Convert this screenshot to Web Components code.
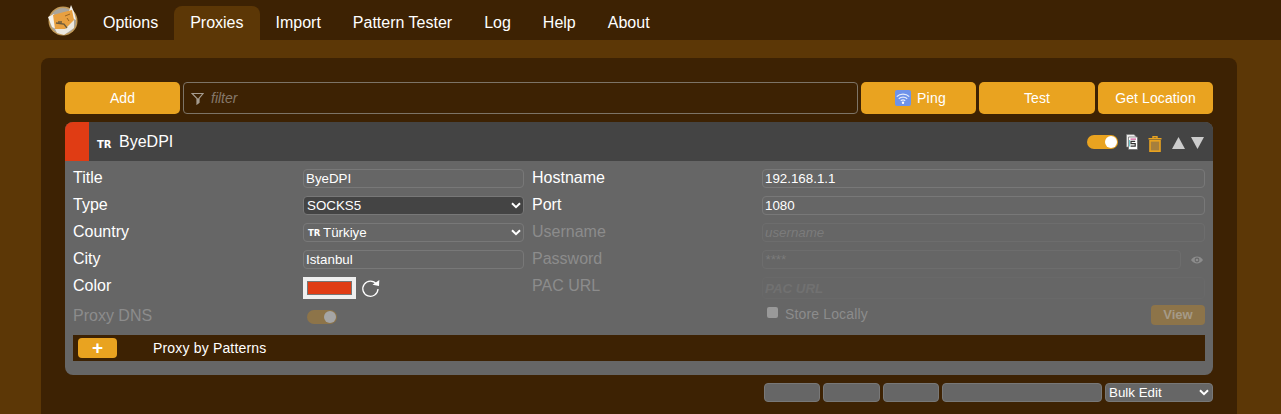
<!DOCTYPE html>
<html lang="en">
<head>
<meta charset="utf-8">
<title>Proxies</title>
<style>
    html, body { margin: 0; height: 100%; overflow: hidden; }
    body {
        background: #5c3706;
        color: #fff;
        font: 16px "Liberation Sans", Arial, sans-serif;
    }
</style>
</head>
<body>
<fox-nav>
    <fox-tab>Options</fox-tab>
    <fox-tab active>Proxies</fox-tab>
    <fox-tab>Import</fox-tab>
    <fox-tab>Pattern Tester</fox-tab>
    <fox-tab>Log</fox-tab>
    <fox-tab>Help</fox-tab>
    <fox-tab>About</fox-tab>
</fox-nav>
<fox-panel>
    <fox-toolbar>
        <fox-button>Add</fox-button>
        <fox-filter></fox-filter>
        <fox-button icon="wifi">Ping</fox-button>
        <fox-button>Test</fox-button>
        <fox-button>Get Location</fox-button>
    </fox-toolbar>
    <proxy-card title-text="ByeDPI" flag="TR">
        <fox-label>Title</fox-label>
        <fox-input value="ByeDPI"></fox-input>
        <fox-label>Hostname</fox-label>
        <fox-input value="192.168.1.1"></fox-input>

        <fox-label>Type</fox-label>
        <fox-select dark options="SOCKS5"></fox-select>
        <fox-label>Port</fox-label>
        <fox-input value="1080"></fox-input>

        <fox-label>Country</fox-label>
        <fox-select options="Türkiye" flag="TR"></fox-select>
        <fox-label disabled>Username</fox-label>
        <fox-input placeholder="username" disabled></fox-input>

        <fox-label>City</fox-label>
        <fox-input value="Istanbul"></fox-input>
        <fox-label disabled>Password</fox-label>
        <fox-input placeholder="****" disabled eye></fox-input>

        <fox-label>Color</fox-label>
        <fox-color value="#e03c14"></fox-color>
        <fox-label disabled>PAC URL</fox-label>
        <fox-input placeholder="PAC URL" disabled tall></fox-input>

        <fox-label disabled>Proxy DNS</fox-label>
        <fox-toggle disabled></fox-toggle>
        <span></span>
        <fox-store></fox-store>

        <fox-patterns slot="footer">Proxy by Patterns</fox-patterns>
    </proxy-card>
    <fox-bulk></fox-bulk>
</fox-panel>

<script>
class FoxNav extends HTMLElement {
    constructor() {
        super();
        this.attachShadow({ mode: 'open' });
        this.shadowRoot.innerHTML = `
            <style>
                :host {
                    display: flex;
                    align-items: flex-end;
                    height: 40px;
                    padding-left: 47px;
                    background: #3d2203;
                }
                svg { width: 33px; height: 33px; margin: 0 7px 3px 0; display: block; }
            </style>
            <svg viewBox="0 0 33 33">
                <circle cx="16" cy="17" r="14.5" fill="#c29a58"/>
                <circle cx="16" cy="17" r="13" fill="#a9a59c"/>
                <path d="M1 13 L7 10 L11 26 L5 23 Z" fill="#f4f1ea"/>
                <path d="M22 7 L24 1 L27 8 L29 16 L25 14 Z" fill="#f4f1ea"/>
                <path d="M8 25 L18 25 L27 15 L27 24 L17 31 L10 29 Z" fill="#ece8df"/>
                <path d="M6 11 L17 8 L25 6 L27 16 L18 25 L8 25 Z" fill="#e8a040"/>
                <path d="M9 19 L17 20 L20 24" stroke="#6b5a3c" stroke-width="1.3" fill="none"/>
                <path d="M11 18 L15 18" stroke="#4f4a3e" stroke-width="1.2"/>
                <path d="M18 12 L23 10 M20 14 L22 17" stroke="#9a6420" stroke-width="1"/>
            </svg>
            <slot></slot>
        `;
    }
}

class FoxTab extends HTMLElement {
    constructor() {
        super();
        this.attachShadow({ mode: 'open' });
        this.shadowRoot.innerHTML = `
            <style>
                :host {
                    display: block;
                    height: 34px;
                    line-height: 33px;
                    padding: 0 16px;
                    border-radius: 8px 8px 0 0;
                    color: #fff;
                }
                :host([active]) { background: #5c3706; }
            </style>
            <slot></slot>
        `;
    }
}

class FoxPanel extends HTMLElement {
    constructor() {
        super();
        this.attachShadow({ mode: 'open' });
        this.shadowRoot.innerHTML = `
            <style>
                :host {
                    display: block;
                    margin: 18px 44px 0 41px;
                    padding: 24px 24px 24px;
                    border-radius: 8px;
                    background: #3d2203;
                }
            </style>
            <slot></slot>
        `;
    }
}

class FoxToolbar extends HTMLElement {
    constructor() {
        super();
        this.attachShadow({ mode: 'open' });
        this.shadowRoot.innerHTML = `
            <style>
                :host {
                    display: grid;
                    grid-template-columns: 115px 1fr 115px 116px 115px;
                    gap: 3px;
                    height: 32px;
                    margin-bottom: 8px;
                }
            </style>
            <slot></slot>
        `;
    }
}

class FoxButton extends HTMLElement {
    constructor() {
        super();
        this.attachShadow({ mode: 'open' });
        const wifi = this.getAttribute('icon') === 'wifi';
        const icon = wifi ? `
            <svg viewBox="0 0 16 16" width="16" height="16">
                <rect width="16" height="16" rx="2" fill="#6e93ea"/>
                <g fill="none" stroke="#e4ecfb" stroke-width="1.3">
                    <path d="M1.8 6.6 C5 3.2 11 3.2 14.2 6.6"/>
                    <path d="M3.8 8.8 C6 6.6 10 6.6 12.2 8.8"/>
                    <path d="M5.8 10.8 C7 9.8 9 9.8 10.2 10.8"/>
                </g>
                <circle cx="8" cy="12.8" r="1.2" fill="#fff"/>
            </svg>` : '';
        this.shadowRoot.innerHTML = `
            <style>
                :host {
                    display: block;
                }
                button {
                    display: flex;
                    align-items: center;
                    justify-content: center;
                    gap: 6px;
                    box-sizing: border-box;
                    width: 100%;
                    height: 100%;
                    border: 0;
                    padding: 0 0 0 ${wifi ? '4px' : '0'};
                    border-radius: 5px;
                    background: #e9a320;
                    color: #fff;
                    font: 14px "Liberation Sans", Arial, sans-serif;
                    letter-spacing: ${wifi ? '.3px' : '.1px'};
                }
            </style>
            <button>${icon}<slot></slot></button>
        `;
    }
}

class FoxFilter extends HTMLElement {
    constructor() {
        super();
        this.attachShadow({ mode: 'open' });
        this.shadowRoot.innerHTML = `
            <style>
                :host {
                    display: flex;
                    align-items: center;
                    gap: 7px;
                    padding: 0 7px;
                    border: 1px solid #7d7467;
                    border-radius: 4px;
                }
                svg { flex: none; }
                input {
                    flex: 1;
                    min-width: 0;
                    border: 0;
                    padding: 0;
                    background: transparent;
                    color: #fff;
                    font: italic 14px "Liberation Sans", Arial, sans-serif;
                }
                input::placeholder { color: #85786a; opacity: 1; }
            </style>
            <svg viewBox="0 0 13 13" width="13" height="13">
                <path d="M1 1.5 H12 L8 6.5 V10.5 L6 12 V6.5 Z" fill="none" stroke="#a59c90" stroke-width="1.2"/>
                <path d="M6 6.5 H8 V10.5 L6 12 Z" fill="#a59c90"/>
            </svg>
            <input placeholder="filter">
        `;
    }
}

class ProxyCard extends HTMLElement {
    constructor() {
        super();
        this.attachShadow({ mode: 'open' });
        this.shadowRoot.innerHTML = `
            <style>
                :host {
                    display: block;
                    border-radius: 8px;
                    overflow: hidden;
                    background: #666;
                }
                header {
                    display: flex;
                    align-items: center;
                    height: 39px;
                    background: #444;
                }
                .stripe { width: 24px; height: 100%; background: #e03c14; margin-right: 8px; }
                .flag {
                    width: 22px;
                    margin-top: 6px;
                    font: bold 10px "DejaVu Sans", sans-serif;
                }
                .name { flex: 1; }
                .tools { display: flex; align-items: center; padding-right: 9px; }
                .tools svg { display: block; }
                .grid {
                    display: grid;
                    grid-template-columns: 222px 221px 222px 1fr;
                    gap: 8px;
                    padding: 8px 8px 0;
                }
                .foot { padding: 10px 8px 14px; }
            </style>
            <header>
                <div class="stripe"></div>
                <span class="flag">${this.getAttribute('flag')}</span>
                <span class="name">${this.getAttribute('title-text')}</span>
                <div class="tools">
                    <fox-toggle></fox-toggle>
                    <svg viewBox="0 0 12 16" width="12" height="16" style="margin:0 0 0 8px">
                        <path d="M.5 .5 H8 L10.5 3 V13 H.5 Z" fill="#eee" stroke="#777" stroke-width=".6"/>
                        <path d="M2.5 3 H11.5 V15.5 H2.5 Z" fill="#fff" stroke="#666" stroke-width=".7"/>
                        <path d="M4.5 5.2 H10" stroke="#d05a9a" stroke-width="1.2"/>
                        <path d="M9.2 7.4 H5 V9.6 H9.2 V12.2 H4.6" fill="none" stroke="#333" stroke-width="1.2"/>
                        <path d="M3.6 6 V12.5" stroke="#3ab5c0" stroke-width=".8"/>
                    </svg>
                    <svg viewBox="0 0 14 16" width="14" height="16" style="margin:5px 0 0 10px">
                        <path d="M5 2 V.8 H9 V2 M.5 2.7 H13.5" fill="none" stroke="#e9a320" stroke-width="1.4"/>
                        <rect x="2" y="4.8" width="10" height="10.4" fill="#a67f3c" stroke="#e9a320" stroke-width="1.6"/>
                    </svg>
                    <svg viewBox="0 0 13 12" width="13" height="12" style="margin:3px 0 0 10px">
                        <path d="M6.5 0 L13 12 H0 Z" fill="#ccc"/>
                    </svg>
                    <svg viewBox="0 0 13 12" width="13" height="12" style="margin:3px 0 0 6px">
                        <path d="M0 0 H13 L6.5 12 Z" fill="#ccc"/>
                    </svg>
                </div>
            </header>
            <div class="grid"><slot></slot></div>
            <div class="foot"><slot name="footer"></slot></div>
        `;
    }
}

class FoxLabel extends HTMLElement {
    constructor() {
        super();
        this.attachShadow({ mode: 'open' });
        this.shadowRoot.innerHTML = `
            <style>
                :host { display: block; line-height: 18px; color: #fff; }
                :host([disabled]) { color: #8c8c8c; }
            </style>
            <slot></slot>
        `;
    }
}

class FoxInput extends HTMLElement {
    constructor() {
        super();
        this.attachShadow({ mode: 'open' });
        const disabled = this.hasAttribute('disabled');
        const eye = this.hasAttribute('eye') ? `
            <svg viewBox="0 0 12 8" width="12" height="8">
                <path d="M0 4 C3 -.6 9 -.6 12 4 C9 8.6 3 8.6 0 4 Z" fill="#8c8c8c"/>
                <circle cx="6" cy="4" r="2.4" fill="#666"/>
                <circle cx="6" cy="4" r="1.3" fill="#8c8c8c"/>
            </svg>` : '';
        this.shadowRoot.innerHTML = `
            <style>
                :host {
                    display: flex;
                    align-items: center;
                    gap: 10px;
                    height: 19px;
                }
                :host([tall]) { height: 22px; }
                input {
                    flex: 1;
                    min-width: 0;
                    box-sizing: border-box;
                    height: 100%;
                    padding: 0 2px;
                    border: 1px solid #787878;
                    border-radius: 4px;
                    background: transparent;
                    color: #fff;
                    font: 13.33px "Liberation Sans", Arial, sans-serif;
                }
                input:disabled { border-color: #6d6d6d; }
                input::placeholder { color: #7b7b7b; opacity: 1; font-style: italic; }
                :host([tall]) input { border-color: #696969; }
                :host([tall]) input::placeholder { color: #717171; font-weight: bold; }
                svg { flex: none; margin-right: 2px; }
            </style>
            <input value="${this.getAttribute('value') || ''}"
                   placeholder="${this.getAttribute('placeholder') || ''}"
                   ${disabled ? 'disabled' : ''}>
            ${eye}
        `;
    }
}

class FoxSelect extends HTMLElement {
    constructor() {
        super();
        this.attachShadow({ mode: 'open' });
        const flag = this.getAttribute('flag');
        const options = (this.getAttribute('options') || '').split(',')
            .map(o => `<option>${o}</option>`).join('');
        this.shadowRoot.innerHTML = `
            <style>
                :host {
                    display: block;
                    position: relative;
                    height: 19px;
                }
                select {
                    appearance: none;
                    box-sizing: border-box;
                    width: 100%;
                    height: 100%;
                    padding: 0 2px 0 ${flag ? '19px' : '3px'};
                    border: 1px solid #787878;
                    border-radius: 4px;
                    background: transparent;
                    color: #fff;
                    font: 13.33px "Liberation Sans", Arial, sans-serif;
                }
                option { background: #444; }
                :host([dark]) select { background: #444; }
                .flag {
                    position: absolute;
                    left: 5px;
                    top: 5px;
                    font: bold 8.5px/10px "DejaVu Sans", sans-serif;
                }
                svg { position: absolute; right: 3px; top: 6px; pointer-events: none; }
            </style>
            <select>${options}</select>
            ${flag ? `<span class="flag">${flag}</span>` : ''}
            <svg viewBox="0 0 10 7" width="10" height="7">
                <path d="M1 1.2 L5 5.2 L9 1.2" fill="none" stroke="#fff" stroke-width="2"/>
            </svg>
        `;
    }
}

class FoxColor extends HTMLElement {
    constructor() {
        super();
        this.attachShadow({ mode: 'open' });
        this.shadowRoot.innerHTML = `
            <style>
                :host { display: flex; align-items: center; gap: 5px; height: 22px; }
                input {
                    appearance: none;
                    box-sizing: border-box;
                    width: 53px;
                    height: 22px;
                    padding: 4px;
                    border: 0;
                    background: #efefef;
                }
                input::-webkit-color-swatch-wrapper { padding: 0; }
                input::-webkit-color-swatch { border: 1px solid #767676; border-radius: 0; }
            </style>
            <input type="color" value="${this.getAttribute('value')}">
            <svg viewBox="0 0 19 19" width="19" height="19">
                <path d="M15.4 5 A7.6 7.6 0 1 0 17 10" fill="none" stroke="#fff" stroke-width="1.3"/>
                <path d="M11.5 5.8 L18 7 L18.3 1 Z" fill="#fff"/>
            </svg>
        `;
    }
}

class FoxToggle extends HTMLElement {
    constructor() {
        super();
        this.attachShadow({ mode: 'open' });
        this.shadowRoot.innerHTML = `
            <style>
                :host {
                    display: block;
                    box-sizing: border-box;
                    width: 31px;
                    height: 14px;
                    border-radius: 7px;
                    background: #e9a320;
                    position: relative;
                }
                :host::after {
                    content: "";
                    position: absolute;
                    right: 1px;
                    top: 1px;
                    width: 12px;
                    height: 12px;
                    border-radius: 50%;
                    background: #fff;
                }
                :host([disabled]) { width: 30px; margin: 3px 0 0 4px; background: #8d7449; }
                :host([disabled])::after { background: #a5a5a5; }
            </style>
        `;
    }
}

class FoxStore extends HTMLElement {
    constructor() {
        super();
        this.attachShadow({ mode: 'open' });
        this.shadowRoot.innerHTML = `
            <style>
                :host {
                    display: flex;
                    align-items: flex-start;
                    color: #8c8c8c;
                    font-size: 14px;
                }
                i {
                    width: 11px;
                    height: 11px;
                    margin: 0 7px 0 5px;
                    border-radius: 2px;
                    background: #999;
                }
                span { flex: 1; line-height: 14px; letter-spacing: .15px; }
                b {
                    width: 54px;
                    height: 20px;
                    margin-top: -2px;
                    border-radius: 4px;
                    background: #8d7449;
                    color: #a59a87;
                    font: bold 13px/20px "Liberation Sans", Arial, sans-serif;
                    text-align: center;
                }
            </style>
            <i></i><span>Store Locally</span><b>View</b>
        `;
    }
}

class FoxPatterns extends HTMLElement {
    constructor() {
        super();
        this.attachShadow({ mode: 'open' });
        this.shadowRoot.innerHTML = `
            <style>
                :host {
                    display: flex;
                    align-items: center;
                    height: 26px;
                    padding-left: 5px;
                    background: #3d2203;
                    font-size: 14px;
                    letter-spacing: .17px;
                }
                button {
                    width: 39px;
                    height: 20px;
                    margin-right: 36px;
                    padding: 0;
                    border: 0;
                    border-radius: 4px;
                    background: #e9a320;
                    color: #fff;
                    font: bold 19px/18px "Liberation Sans", Arial, sans-serif;
                }
            </style>
            <button>+</button>
            <slot></slot>
        `;
    }
}

class FoxBulk extends HTMLElement {
    constructor() {
        super();
        this.attachShadow({ mode: 'open' });
        this.shadowRoot.innerHTML = `
            <style>
                :host {
                    display: flex;
                    justify-content: flex-end;
                    gap: 3px;
                    height: 19px;
                    margin-top: 8px;
                }
                div, select {
                    box-sizing: border-box;
                    border: 1px solid #787878;
                    border-radius: 4px;
                    background: #666;
                }
                .s { width: 56px; }
                .m { width: 57px; }
                .l { width: 160px; }
                .w { position: relative; width: 108px; border: 0; background: none; }
                select {
                    appearance: none;
                    width: 100%;
                    height: 100%;
                    padding: 0 3px;
                    color: #fff;
                    font: 13.33px "Liberation Sans", Arial, sans-serif;
                }
                svg { position: absolute; right: 4px; top: 6px; pointer-events: none; }
            </style>
            <div class="s"></div><div class="m"></div><div class="s"></div><div class="l"></div>
            <div class="w">
                <select><option>Bulk Edit</option></select>
                <svg viewBox="0 0 10 7" width="10" height="7">
                    <path d="M1 1.2 L5 5.2 L9 1.2" fill="none" stroke="#fff" stroke-width="2"/>
                </svg>
            </div>
        `;
    }
}

customElements.define('fox-nav', FoxNav);
customElements.define('fox-tab', FoxTab);
customElements.define('fox-panel', FoxPanel);
customElements.define('fox-toolbar', FoxToolbar);
customElements.define('fox-button', FoxButton);
customElements.define('fox-filter', FoxFilter);
customElements.define('proxy-card', ProxyCard);
customElements.define('fox-label', FoxLabel);
customElements.define('fox-input', FoxInput);
customElements.define('fox-select', FoxSelect);
customElements.define('fox-color', FoxColor);
customElements.define('fox-toggle', FoxToggle);
customElements.define('fox-store', FoxStore);
customElements.define('fox-patterns', FoxPatterns);
customElements.define('fox-bulk', FoxBulk);
</script>
</body>
</html>
